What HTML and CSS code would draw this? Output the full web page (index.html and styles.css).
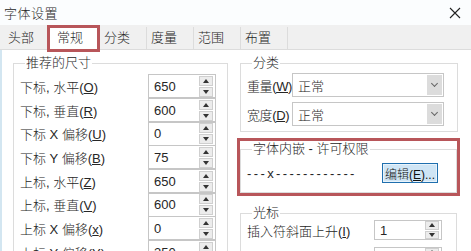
FILE: index.html
```html
<!DOCTYPE html>
<html lang="zh-CN">

<head>
  <meta charset="UTF-8">
  <meta name="viewport" content="width=device-width, initial-scale=1.0">
  <title>字体设置</title>

  <link rel="stylesheet" href="styles.css">
</head>

<body>
  <section class="window">
    <div class="titlebar">
      <span class="title">字体设置</span>
      <svg class="close" width="12" height="12" viewBox="0 0 12 12">
        <path d="M1 1 L11 11 M11 1 L1 11" stroke="#222" stroke-width="1.1" fill="none" />
      </svg>
    </div>

    <div class="tabs">
      <div class="tab tab-first">头部</div>
      <div class="tab active">常规</div>
      <div class="tab">分类</div>
      <div class="tab">度量</div>
      <div class="tab">范围</div>
      <div class="tab">布置</div>
    </div>

    <div class="panel">
      <fieldset class="group size-group">
        <legend>推荐的尺寸</legend>
        <div class="field-row">
          <label>下标, 水平(<u>O</u>)</label>
          <div class="spin"><span class="spin-value">650</span><span class="spin-btns"><i class="up"></i><i class="down"></i></span></div>
        </div>
        <div class="field-row">
          <label>下标, 垂直(<u>R</u>)</label>
          <div class="spin"><span class="spin-value">600</span><span class="spin-btns"><i class="up"></i><i class="down"></i></span></div>
        </div>
        <div class="field-row">
          <label>下标 X 偏移(<u>U</u>)</label>
          <div class="spin"><span class="spin-value">0</span><span class="spin-btns"><i class="up"></i><i class="down"></i></span></div>
        </div>
        <div class="field-row">
          <label>下标 Y 偏移(<u>B</u>)</label>
          <div class="spin"><span class="spin-value">75</span><span class="spin-btns"><i class="up"></i><i class="down"></i></span></div>
        </div>
        <div class="field-row">
          <label>上标, 水平(<u>Z</u>)</label>
          <div class="spin"><span class="spin-value">650</span><span class="spin-btns"><i class="up"></i><i class="down"></i></span></div>
        </div>
        <div class="field-row">
          <label>上标, 垂直(<u>V</u>)</label>
          <div class="spin"><span class="spin-value">600</span><span class="spin-btns"><i class="up"></i><i class="down"></i></span></div>
        </div>
        <div class="field-row">
          <label>上标 X 偏移(<u>x</u>)</label>
          <div class="spin"><span class="spin-value">0</span><span class="spin-btns"><i class="up"></i><i class="down"></i></span></div>
        </div>
        <div class="field-row">
          <label>上标 Y 偏移(<u>Y</u>)</label>
          <div class="spin"><span class="spin-value">350</span><span class="spin-btns"><i class="up"></i><i class="down"></i></span></div>
        </div>
      </fieldset>

      <div class="right-col">
        <fieldset class="group class-group">
          <legend>分类</legend>
          <div class="combo-row">
            <label>重量(<u>W</u>)</label>
            <div class="combo"><span class="combo-value">正常</span><span class="combo-btn"></span></div>
          </div>
          <div class="combo-row">
            <label>宽度(<u>D</u>)</label>
            <div class="combo"><span class="combo-value">正常</span><span class="combo-btn"></span></div>
          </div>
        </fieldset>

        <fieldset class="group embed-group">
          <legend>字体内嵌 - 许可权限</legend>
          <div class="embed-row">
            <span class="embed-flags">---x------------</span>
            <button class="edit-btn">编辑(<u>E</u>)...</button>
          </div>
        </fieldset>

        <fieldset class="group cursor-group">
          <legend>光标</legend>
          <div class="cursor-row">
            <label>插入符斜面上升(<u>I</u>)</label>
            <div class="spin spin-short"><span class="spin-value">1</span><span class="spin-btns"><i class="up"></i><i class="down"></i></span></div>
          </div>
          <div class="cursor-row">
            <label>插入符斜面下降(<u>N</u>)</label>
            <div class="spin spin-short"><span class="spin-value">0</span><span class="spin-btns"><i class="up"></i><i class="down"></i></span></div>
          </div>
        </fieldset>
      </div>
    </div>
  </section>
</body>

</html>
```

FILE: styles.css
```css
* {
  margin: 0;
  padding: 0;
  box-sizing: border-box;
}

body {
  width: 471px;
  height: 251px;
  overflow: hidden;
  font-family: "Liberation Sans", "Noto Sans CJK SC", sans-serif;
  font-size: 13px;
  font-weight: 300;
  color: #262626;
  background-color: #fff;
}

.window {
  width: 471px;
  height: 251px;
  overflow: hidden;
}

.titlebar {
  height: 25px;
  display: flex;
  align-items: center;
  justify-content: space-between;
  padding: 0 10px 0 4px;
  background-color: #fbfdfe;
}

.title {
  font-size: 13px;
  letter-spacing: 0.5px;
}

.tabs {
  height: 25px;
  display: flex;
  align-items: flex-end;
  padding-left: 2px;
  background-color: #f0f0f0;
  border-bottom: 1px solid #dcdcdc;
}

.tab {
  width: 47px;
  height: 22px;
  padding-left: 4px;
  line-height: 21px;
  border-right: 1px solid #dcdcdc;
}

.tab-first {
  width: 45px;
  padding-left: 6px;
  border-right: none;
}

.tab.active {
  width: 53px;
  height: 27px;
  margin-bottom: -3px;
  padding-left: 7px;
  line-height: 20px;
  background-color: #fff;
  border: 3px solid #b8565a;
  position: relative;
  z-index: 2;
}

.panel {
  height: 201px;
  display: flex;
  gap: 12px;
  padding: 5px 0 0 13px;
  border-left: 2px solid #d3e6f1;
}

.group {
  flex-shrink: 0;
  border: 1px solid #dcdcdc;
}

.group legend {
  margin-left: 5px;
  padding: 0 1px;
  line-height: 16px;
}

.group label {
  white-space: nowrap;
}

.size-group {
  width: 215px;
  height: 220px;
  margin-left: -2px;
  padding: 4px 11px 0 6px;
  display: flex;
  flex-direction: column;
  gap: 1px;
}

.field-row {
  height: 22.7px;
  flex-shrink: 0;
  display: flex;
  align-items: center;
  justify-content: space-between;
}

.spin {
  width: 68px;
  height: 24px;
  flex-shrink: 0;
  display: flex;
  align-items: center;
  justify-content: space-between;
  padding: 0 2px 0 5px;
  border: 1px solid #c6c6c6;
  background-color: #fff;
}

.spin-btns {
  width: 14px;
  height: 21px;
  display: flex;
  flex-direction: column;
  gap: 1px;
}

.spin-btns i {
  flex: 1;
  display: flex;
  align-items: center;
  justify-content: center;
  background-color: #ececec;
  border: 1px solid #cfcfcf;
}

.spin-btns i::after {
  content: "";
  border-left: 3px solid transparent;
  border-right: 3px solid transparent;
}

.spin-btns .up::after {
  border-bottom: 4px solid #333;
}

.spin-btns .down::after {
  border-top: 4px solid #333;
}

.right-col {
  width: 217px;
  display: flex;
  flex-direction: column;
}

.class-group {
  height: 77px;
  padding: 2px 13px 0 6px;
  display: flex;
  flex-direction: column;
  gap: 5px;
}

.combo-row {
  display: flex;
  align-items: center;
  justify-content: space-between;
}

.combo-row label {
  letter-spacing: -0.4px;
}

.combo {
  width: 152px;
  height: 24px;
  flex-shrink: 0;
  display: flex;
  align-items: center;
  justify-content: space-between;
  padding: 1px 1px 1px 5px;
  border: 1px solid #c6c6c6;
}

.combo-btn {
  width: 15px;
  height: 100%;
  display: flex;
  align-items: center;
  justify-content: center;
  background-color: #dcdcdc;
}

.combo-btn::after {
  content: "";
  width: 4px;
  height: 4px;
  margin-top: -3px;
  border-right: 1px solid #666;
  border-bottom: 1px solid #666;
  transform: rotate(45deg);
}

.embed-group {
  height: 52px;
  margin-top: 9px;
  padding: 6px 18px 0 6px;
  outline: 3px solid #b8565a;
}

.embed-row {
  display: flex;
  align-items: center;
  justify-content: space-between;
}

.embed-flags {
  font-size: 13px;
  letter-spacing: 2.4px;
}

.edit-btn {
  width: 56px;
  height: 20px;
  font-family: inherit;
  font-size: 12px;
  font-weight: 300;
  color: #111;
  background-color: #cfe5f5;
  border: 1px solid #1f6fae;
  box-shadow: inset 0 0 0 1px #e8f3fb;
}

.cursor-group {
  height: 60px;
  margin-top: 12px;
  padding: 0 14px 0 6px;
  display: flex;
  flex-direction: column;
  gap: 7px;
}

.cursor-row {
  display: flex;
  align-items: center;
  justify-content: space-between;
}

.cursor-row:first-of-type {
  margin-top: -1px;
}

.spin-short {
  height: 20px;
}

.spin-short .spin-btns {
  height: 18px;
}
```
